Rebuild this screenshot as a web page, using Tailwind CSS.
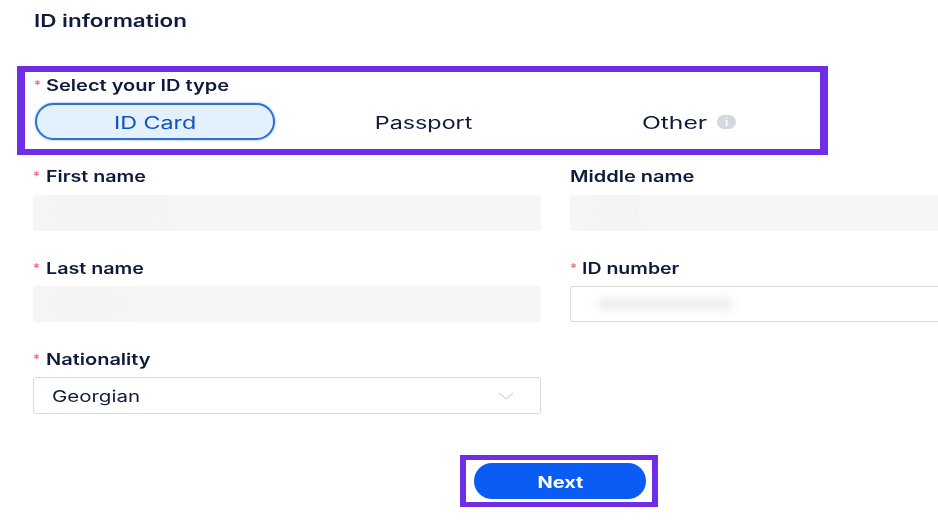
<!DOCTYPE html>
<html lang="en">
<head>
<meta charset="utf-8">
<title>ID information</title>
<script src="https://cdn.jsdelivr.net/npm/@tailwindcss/browser@4"></script>
</head>
<body class="bg-white">
<main class="w-[938px] h-[532px] overflow-hidden font-['Inter',sans-serif] text-[#0f1b3d] flex flex-col">
  <h1 class="ml-[34px] mt-[11px] h-[20px] leading-[20px] text-[17px] font-semibold"><span class="inline-block origin-left scale-x-[1.32]">ID information</span></h1>

  <section class="ml-[17px] mt-[35px] w-[811px] h-[89px] border-x-[8px] border-y-[6px] border-[#6f2ee6] px-[10px] pt-[6px]">
    <div class="h-[16px] leading-[15px] text-[16px] font-semibold flex">
      <span class="w-[11px] -ml-[1px] mr-[1px] text-[#e8757c] text-[13px]">*</span><span class="inline-block origin-left scale-x-[1.25]">Select your ID type</span>
    </div>
    <div class="mt-[9px] flex items-center h-[37px] text-[17px]">
      <div class="w-[240px] h-[37px] rounded-full bg-[#e3f0fd] border-2 border-[#2f6fd6] shadow-[0_0_3px_#8fb8f0] text-[#0d52c4] flex items-center justify-center"><span class="inline-block scale-x-[1.37] pt-[4px]">ID Card</span></div>
      <div class="w-[298px] text-center"><span class="inline-block scale-x-[1.37] pt-[4px]">Passport</span></div>
      <div class="ml-[69px] flex items-center gap-[11px]">
        <span class="inline-block w-[64px] text-center"><span class="inline-block scale-x-[1.45] pt-[4px]">Other</span></span>
        <span class="w-[19px] h-[14px] rounded-full bg-[#d3d7de] text-white text-[10px] leading-[14px] text-center font-bold">i</span>
      </div>
    </div>
  </section>

  <section class="ml-[33px] mt-[14px] grid grid-cols-[508px_420px] gap-x-[29px] gap-y-[29px]">
    <div>
      <div class="h-[16px] leading-[14px] text-[16px] font-semibold flex"><span class="w-[13px] text-[#e8757c] text-[13px]">*</span><span class="inline-block origin-left scale-x-[1.23]">First name</span></div>
      <div class="mt-[10px] h-[36px] rounded-[3px] bg-[#f6f6f6] flex items-center pl-[12px]"><div class="w-[120px] h-[24px] bg-[#f4f4f4] blur-[4px]"></div></div>
    </div>
    <div>
      <div class="h-[16px] leading-[14px] text-[16px] font-semibold"><span class="inline-block origin-left scale-x-[1.25]">Middle name</span></div>
      <div class="mt-[10px] h-[36px] rounded-[3px] bg-[#f6f6f6] flex items-center pl-[20px]"><div class="w-[50px] h-[24px] bg-[#f4f4f4] blur-[4px]"></div></div>
    </div>
    <div>
      <div class="h-[16px] leading-[16px] text-[16px] font-semibold flex"><span class="w-[13px] text-[#e8757c] text-[13px]">*</span><span class="inline-block origin-left scale-x-[1.23]">Last name</span></div>
      <div class="mt-[10px] h-[36px] rounded-[3px] bg-[#f6f6f6] flex items-center pl-[12px]"><div class="w-[80px] h-[24px] bg-[#f4f4f4] blur-[4px]"></div></div>
    </div>
    <div>
      <div class="h-[16px] leading-[16px] text-[16px] font-semibold flex"><span class="w-[12px] text-[#e8757c] text-[13px]">*</span><span class="inline-block origin-left scale-x-[1.22]">ID number</span></div>
      <div class="mt-[10px] h-[36px] rounded-[3px] border border-[#d9d9d9] flex items-center pl-[26px]">
        <div class="w-[136px] h-[12px] rounded-full bg-[#eceded] blur-[4px]"></div>
      </div>
    </div>
    <div>
      <div class="h-[16px] leading-[16px] text-[16px] font-semibold flex"><span class="w-[13px] text-[#e8757c] text-[13px]">*</span><span class="inline-block origin-left scale-x-[1.25]">Nationality</span></div>
      <div class="mt-[10px] h-[37px] rounded-[3px] border border-[#d9d9d9] flex items-center justify-between pl-[18px] pr-[26px] text-[16px]">
        <span class="inline-block origin-left scale-x-[1.28]">Georgian</span>
        <svg width="16" height="8" viewBox="0 0 16 8" fill="none" stroke="#c4c7cc" stroke-width="1"><path d="M1 1l7 6 7-6"/></svg>
      </div>
    </div>
  </section>

  <section class="ml-[460px] mt-[41px] w-[198px] h-[52px] border-x-[6px] border-y-[5px] border-[#6f2ee6] pl-[8px] pt-[3px]">
    <button class="w-[172px] h-[36px] rounded-full bg-[#0a5cf5] text-white text-[16px] font-bold pt-[2px]"><span class="inline-block scale-x-[1.25]">Next</span></button>
  </section>
</main>
</body>
</html>
